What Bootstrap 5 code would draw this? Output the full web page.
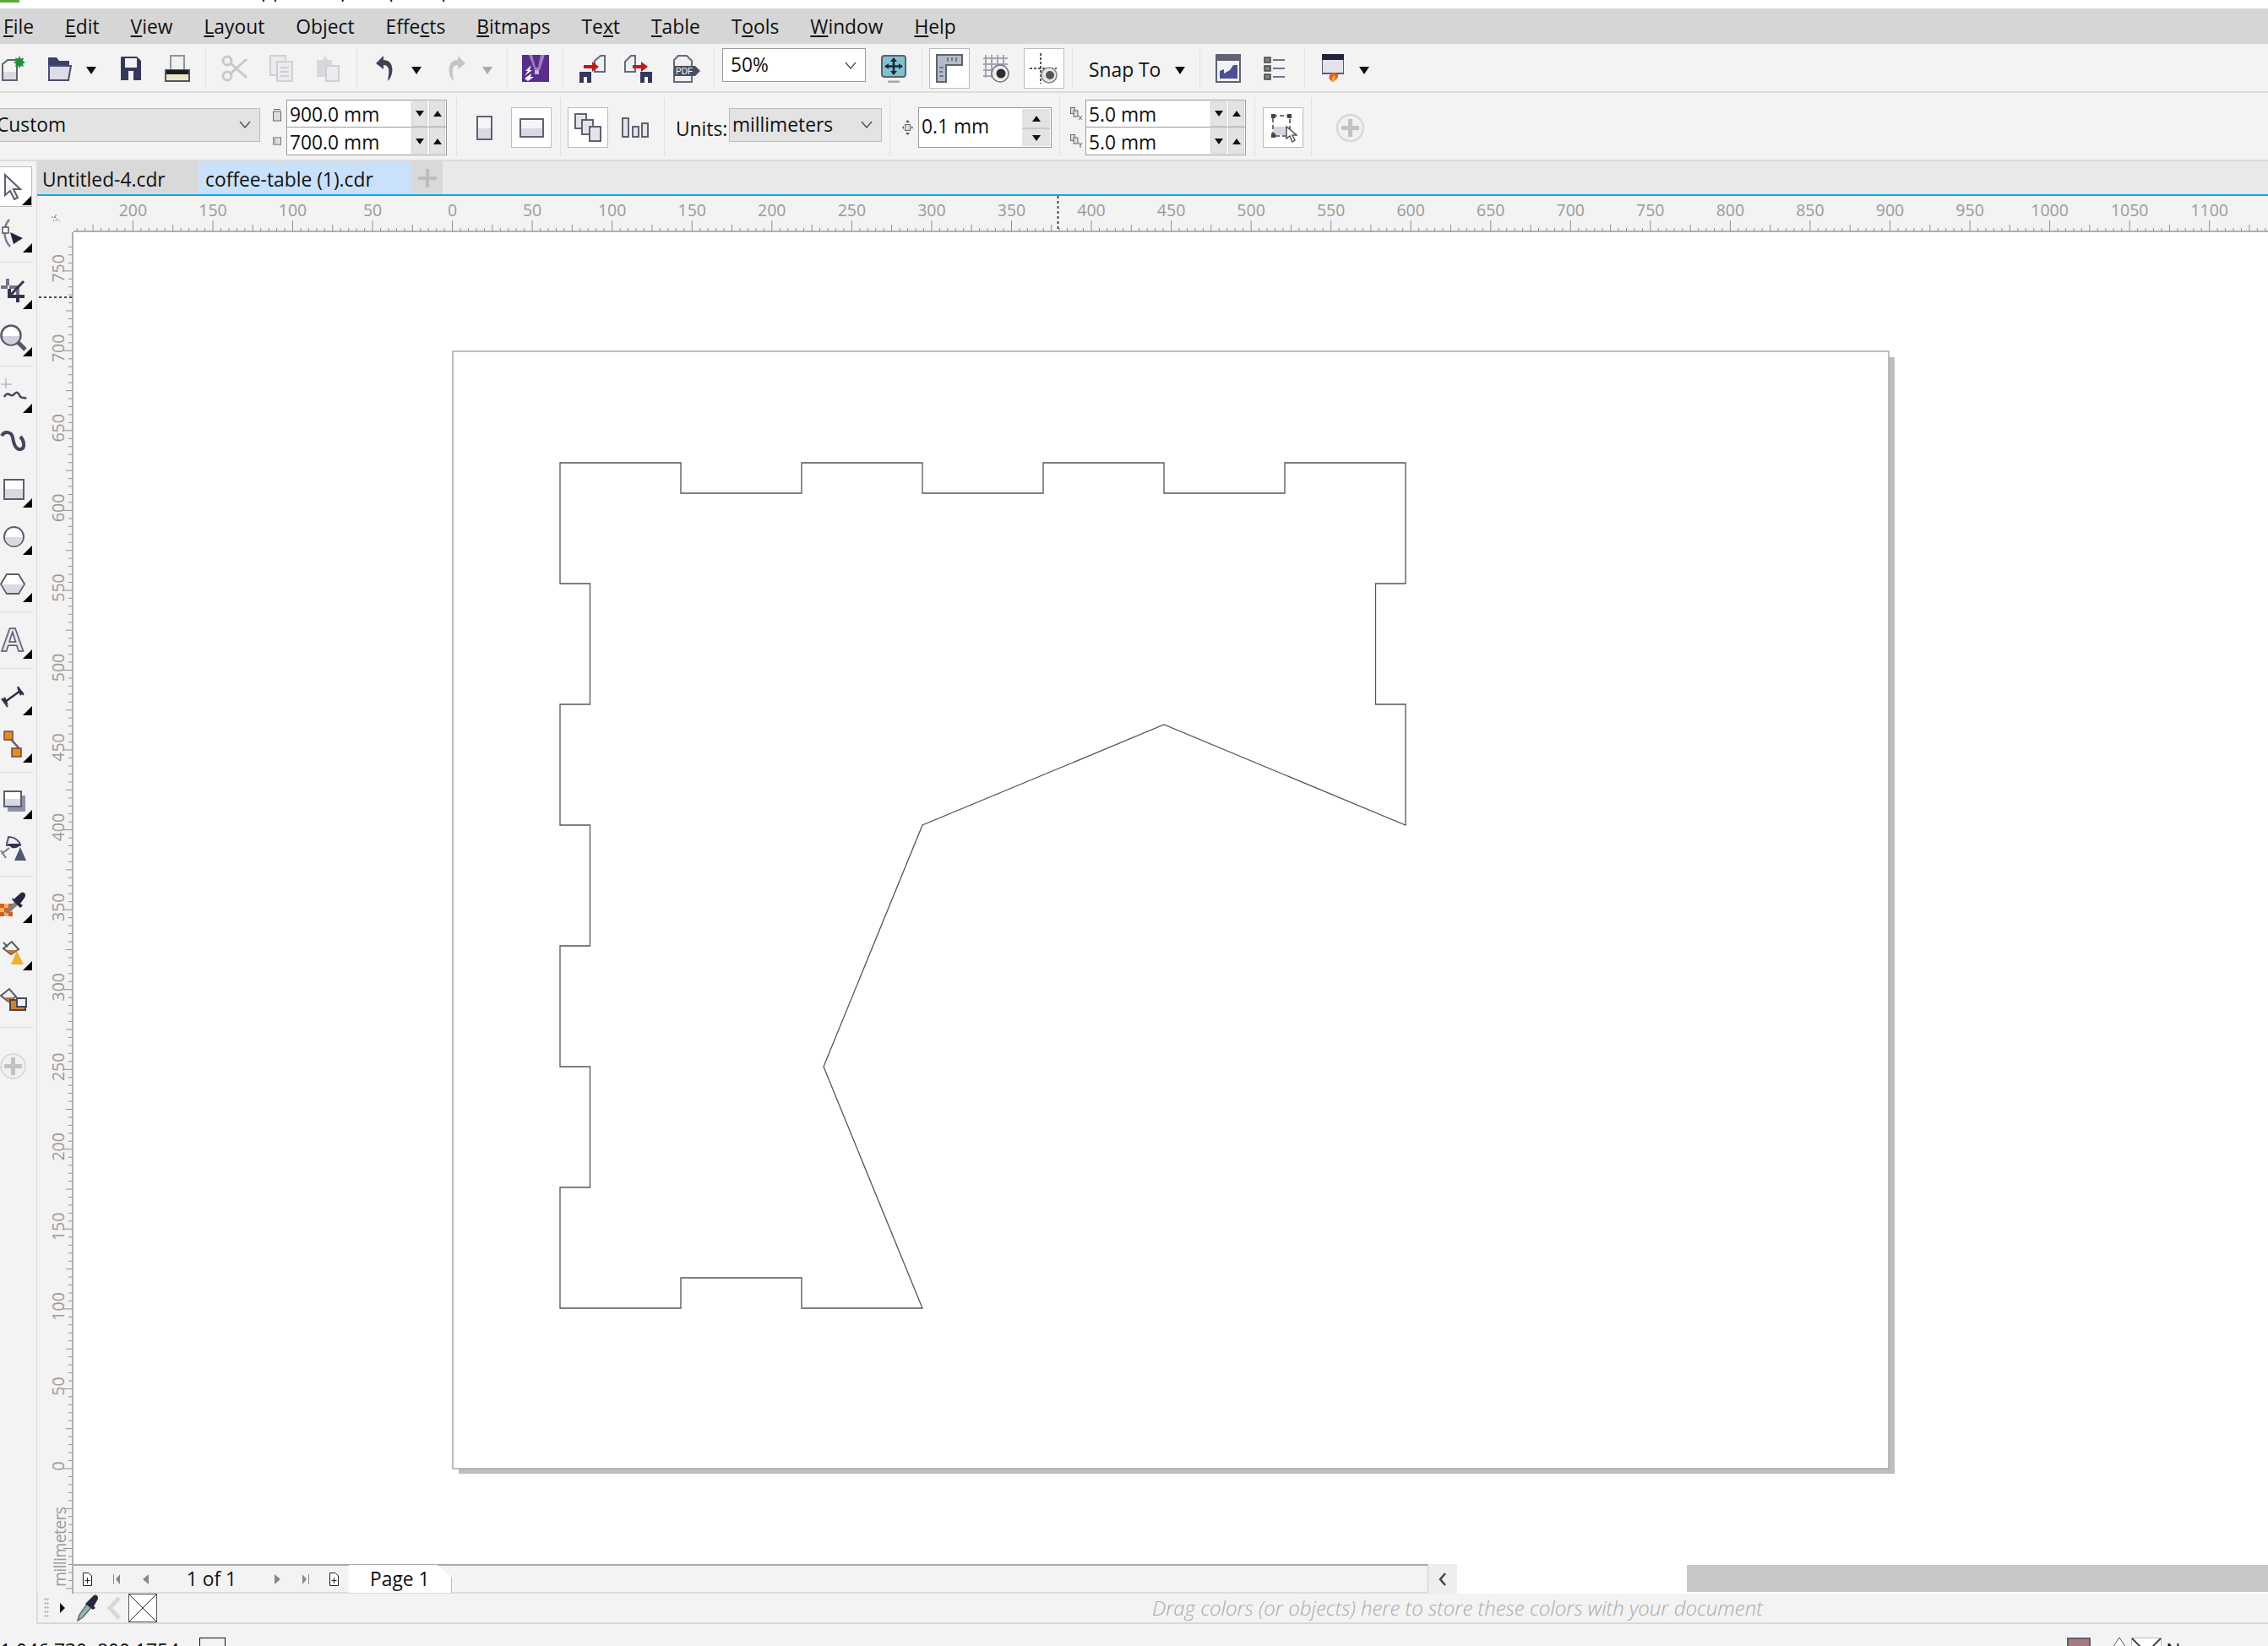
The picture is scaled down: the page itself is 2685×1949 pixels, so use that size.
<!DOCTYPE html>
<html lang="en">
<head>
<meta charset="UTF-8">
<title>CorelDRAW - coffee-table (1).cdr</title>
<link href="https://cdn.jsdelivr.net/npm/bootstrap@5.3.3/dist/css/bootstrap.min.css" rel="stylesheet">
<style>
  html, body { height: 1949px; overflow: hidden; }
  body { width: 2685px; background: #f3f3f3; color: #111; font: 22.8px/32px "Open Sans", "Liberation Sans", sans-serif; }
  svg { display: block; flex: none; }
  .flex-none { flex: none; }

  .titlebar { height: 10px; background: #fff; }
  .titlebar i { width: 23px; height: 3px; background: #5fa83f; flex: none; }
  .titlebar span { margin: -28px 0 0 -9px; white-space: nowrap; }

  .menubar { height: 42px; background: #d6d6d6; gap: 37px; padding-left: 4px; align-items: center; }
  .menubar .nav-link { padding: 2px 0 0; color: #111; }

  .toolbar { height: 58px; border-bottom: 2px solid #dcdcdc; padding-top: 5px; }
  .propbar { height: 81px; border-bottom: 2px solid #dcdcdc; padding-top: 3px; }
  .sep { width: 1px; height: 48px; background: #e2e2e2; flex: none; }
  .propbar .sep { height: 70px; }
  .tb { width: 55px; height: 48px; flex: none; }
  .tb48 { width: 48px; height: 48px; flex: none; padding: 0; border-radius: 0; }
  .tb48.on { background: #fff; border: 1px solid #bdbdbd; }
  .caret { width: 19px; height: 48px; flex: none; }
  .caret::after { content: ""; margin-top: 4px; border-top: 9px solid #111; border-left: 6.5px solid transparent; border-right: 6.5px solid transparent; }
  .caret.off::after { border-top-color: #aaa; }
  .snap { width: 86px; height: 48px; white-space: nowrap; padding-top: 4px; flex: none; }

  .combo { height: 40px; background: #e3e3e3; border: 1px solid #bdbdbd; padding: 0 10px 0 3px; margin-bottom: 7px; white-space: nowrap; flex: none; }
  .combo.white { background: #fff; border-color: #999; padding-left: 9px; margin-bottom: 8px; }
  .combo.cropped { text-indent: -6px; }
  .w170 { width: 170px; } .w181 { width: 181px; } .w310 { width: 310px; }
  .field { height: 33px; background: #fff; border: 1px solid #9a9a9a; padding-left: 3px; padding-right: 1px; }
  .field + .field { border-top: 0; }
  .field > span { padding-top: 3px; }
  .stack { width: 190px; flex: none; }
  .spin { width: 19px; height: 30px; background: #e3e3e3; border: 1px solid #d2d2d2; margin-left: 2px; flex: none; }
  .tri-d { border-top: 7px solid #111; border-left: 5px solid transparent; border-right: 5px solid transparent; }
  .tri-u { border-bottom: 7px solid #111; border-left: 5px solid transparent; border-right: 5px solid transparent; }
  .nudge { width: 158px; height: 48px; background: #fff; border: 1px solid #9a9a9a; padding-left: 3px; flex: none; }
  .nudge > span { padding-bottom: 2px; }
  .nudge .col-spin { width: 33px; height: 44px; background: #e3e3e3; margin-right: 1px; }
  .nudge .col-spin div { height: 22px; }
  .nudge .col-spin div + div { border-top: 2px solid #c9c9c9; }
  .units { width: 58px; white-space: nowrap; padding-top: 4px; flex: none; }
  .mini { width: 10px; flex: none; }

  .ml2 { margin-left: 2px; } .ml3 { margin-left: 3px; } .ml5 { margin-left: 5px; } .ml6 { margin-left: 6px; }
  .ml7 { margin-left: 7px; } .ml8 { margin-left: 8px; } .ml9 { margin-left: 9px; } .ml10 { margin-left: 10px; }
  .ml11 { margin-left: 11px; } .ml12 { margin-left: 12px; } .ml13 { margin-left: 13px; } .ml14 { margin-left: 14px; }
  .ml15 { margin-left: 15px; } .ml16 { margin-left: 16px; } .ml18 { margin-left: 18px; } .ml19 { margin-left: 19px; }
  .ml22 { margin-left: 22px; } .ml23 { margin-left: 23px; } .ml24 { margin-left: 24px; } .ml25 { margin-left: 25px; }
  .ml26 { margin-left: 26px; } .ml27 { margin-left: 27px; } .ml29 { margin-left: 29px; }
  .cut12 { margin-left: -12px; } .cut2 { margin-left: -2px; }

  .toolbox { width: 44px; border-right: 1px solid #dcdcdc; padding-top: 6px; flex: none; }
  .tool { width: 43px; height: 56px; flex: none; position: relative; }
  .tool.fly::after { content: ""; position: absolute; right: 5px; top: calc(50% + 11px); border-bottom: 11px solid #000; border-left: 11px solid transparent; }
  .tool.active { width: 38px; height: 48px; background: #fff; border: 1px solid #bbb; border-left: 0; margin-bottom: 4px; }
  .tool.active::after { right: 0; top: calc(50% + 11px); }
  .tsep { height: 1px; width: 39px; background: #dedede; margin: 5px 0; flex: none; }
  .tool-a { font: bold 38px "Liberation Sans", sans-serif; }

  .docbar { height: 41px; background: #e9e9e9; border-bottom: 2px solid #0da6e8; flex: none; }
  .docbar .nav-link { height: 39px; padding: 0 0 0 6px; color: #111; white-space: nowrap; line-height: 43px; }
  .tab-off { width: 191px; background: #d9d9d9; }
  .tab-on { width: 252px; background: #c9e1fb; padding-left: 8px !important; }
  .tab-add { width: 37px; background: #d9d9d9; }

  .ruler-row { height: 43px; flex: none; }
  .corner { width: 43px; flex: none; }
  .ruler-text { font: 400 19.5px "Open Sans", sans-serif; fill: #9a9a9a; }
  .canvas { background: #fff; position: relative; overflow: hidden; }
  .hbar { height: 35px; flex: none; background: #fff; }
  .pages { width: 1603px; background: #f3f3f3; border-top: 2px solid #aaa; border-bottom: 2px solid #dcdcdc; flex: none; }
  .pages .count { width: 149px; text-align: center; }
  .page-tab { width: 122px; height: 33px; background: #fff; border-right: 1px solid #bbb; padding-left: 25px; clip-path: polygon(0 0, 86% 0, 100% 45%, 100% 100%, 0 100%); }
  .pagebtn { width: 35px; background: #eee; border-left: 1px dotted #aaa; flex: none; }
  .gap-white { width: 272px; flex: none; }
  .thumb { height: 32px; background: #c8c8c8; margin-top: 1px; }

  .palette { height: 36px; border-bottom: 2px solid #d8d8d8; border-left: 1px solid #dcdcdc; flex: none; }
  .grip { width: 6px; height: 26px; background: radial-gradient(circle, #bbb 1.2px, transparent 1.3px) 0 0 / 3px 5px; }
  .play { border-left: 6px solid #111; border-top: 6px solid transparent; border-bottom: 6px solid transparent; }
  .swatch { width: 34px; height: 34px; border: 1px solid #555; background: #fff; }
  .hint { font-style: italic; font-weight: 300; color: #aaa; white-space: nowrap; margin-left: 1178px; font-size: 24px; }

  .status { height: 26px; overflow: hidden; padding-top: 16px; white-space: nowrap; }
  .status .box { width: 31px; height: 30px; border: 1.5px solid #111; margin-left: 24px; }
  .status .right { margin-right: 63px; }
</style>
</head>
<body class="d-flex flex-column">

  <div class="titlebar d-flex overflow-hidden flex-none">
    <i></i>
    <span>CorelDRAW 2018 (64-Bit) - Apps\Temp\Help\Drop\coffee-table (1).cdr</span>
  </div>

  <nav class="nav menubar flex-nowrap flex-none">
    <a class="nav-link"><u>F</u>ile</a>
    <a class="nav-link"><u>E</u>dit</a>
    <a class="nav-link"><u>V</u>iew</a>
    <a class="nav-link"><u>L</u>ayout</a>
    <a class="nav-link">Ob<u>j</u>ect</a>
    <a class="nav-link">Effe<u>c</u>ts</a>
    <a class="nav-link"><u>B</u>itmaps</a>
    <a class="nav-link">Te<u>x</u>t</a>
    <a class="nav-link"><u>T</u>able</a>
    <a class="nav-link">T<u>o</u>ols</a>
    <a class="nav-link"><u>W</u>indow</a>
    <a class="nav-link"><u>H</u>elp</a>
  </nav>

  <!-- standard toolbar -->
  <div class="toolbar d-flex align-items-start flex-none">
    <div class="tb cut12 d-flex align-items-center justify-content-center">
      <svg width="28" height="30" viewBox="0 0 28 30"><path d="M1 10 7 5H18V29H1Z" fill="#f4f4f4" stroke="#5e6272" stroke-width="2"/><path d="M2 19H17V28H2Z" fill="#d9dae2"/><path d="M21 0l1.500 3.500 3.500-1-1 3.500 3 2-3 1.500 1 3.500-3.500-1-1.500 3-1.500-3-3.500 1 1-3.500-3-1.500 3-2-1-3.500 3.500 1Z" fill="#1f8f3a"/></svg>
    </div>
    <div class="tb d-flex align-items-center justify-content-center">
      <svg width="28" height="30" viewBox="0 0 28 30"><path d="M0 2H10L13 6H25V13H0Z" fill="#3b3f6b"/><path d="M1 29V12H27L24 29Z" fill="#dcdde6" stroke="#4a4e72" stroke-width="2"/></svg>
    </div>
    <div class="caret d-flex align-items-center justify-content-center"></div>
    <div class="tb ml10 d-flex align-items-center justify-content-center">
      <svg width="26" height="30" viewBox="0 0 26 30"><path d="M1 2Q1 1 2 1H20L25 6V29H1Z" fill="#34385f"/><rect x="6" y="3" width="14" height="11" fill="#f2f2f5"/><rect x="10" y="18" width="6" height="11" fill="#f2f2f5"/></svg>
    </div>
    <div class="tb d-flex align-items-center justify-content-center">
      <svg width="30" height="32" viewBox="0 0 30 32"><rect x="7" y="1" width="16" height="19" fill="#eef1ef" stroke="#8a97a0" stroke-width="2"/><rect x="1" y="18" width="28" height="13" fill="#e9e6c8" stroke="#555" stroke-width="2"/><rect x="2" y="18" width="26" height="5" fill="#1d1d1d"/></svg>
    </div>
    <div class="sep ml6"></div>
    <div class="tb ml6 d-flex align-items-center justify-content-center">
      <svg width="32" height="32" viewBox="0 0 32 32" fill="none" stroke="#c8c8cc" stroke-width="3"><circle cx="7" cy="7" r="5"/><circle cx="7" cy="25" r="5"/><path d="M11 10 30 27M11 22 30 5"/></svg>
    </div>
    <div class="tb d-flex align-items-center justify-content-center">
      <svg width="28" height="32" viewBox="0 0 28 32" fill="#ececef" stroke="#d0d0d4" stroke-width="2"><rect x="1" y="1" width="18" height="23"/><rect x="9" y="8" width="18" height="23"/><path d="M13 15H23M13 20H23M13 25H23"/></svg>
    </div>
    <div class="tb d-flex align-items-center justify-content-center">
      <svg width="28" height="32" viewBox="0 0 28 32" fill="#d8d8dc"><path d="M1 6H8L11 1 14 6H19V26H1Z"/><rect x="12" y="13" width="15" height="18" fill="#ececef" stroke="#cfcfd3" stroke-width="2"/></svg>
    </div>
    <div class="sep ml7"></div>
    <div class="tb ml5 d-flex align-items-center justify-content-center">
      <svg width="22" height="32" viewBox="0 0 22 32"><path d="M9 1 0 10 9 17V12C15 12 16 17 15 24L14 31C21 25 23 6 9 6Z" fill="#3d4258"/></svg>
    </div>
    <div class="caret d-flex align-items-center justify-content-center"></div>
    <div class="tb ml10 d-flex align-items-center justify-content-center">
      <svg width="22" height="32" viewBox="0 0 22 32"><path d="M13 1 22 10 13 17V12C7 12 6 17 7 24L8 31C1 25-1 6 13 6Z" fill="#c4c4ca"/></svg>
    </div>
    <div class="caret off d-flex align-items-center justify-content-center"></div>
    <div class="sep ml14"></div>
    <div class="tb ml5 d-flex align-items-center justify-content-center">
      <svg width="32" height="32" viewBox="0 0 32 32"><rect width="32" height="32" fill="#5a2c8c"/><path d="M12 0 16 15H19L22 0H27L21 18H15L8 0Z" fill="#9d80c0"/><rect x="15" y="18" width="5" height="5" fill="#c9b6de"/><path d="M3 28 11 22 10 26H14L7 31ZM11 12 4 19 7 19 3 25 12 18 9 18Z" fill="#fff"/></svg>
    </div>
    <div class="sep ml5"></div>
    <div class="tb ml6 d-flex align-items-center justify-content-center">
      <svg width="32" height="33" viewBox="0 0 32 33"><path d="M19 7 26 1H31V20H19Z" fill="#eef0f2" stroke="#666a7a" stroke-width="2"/><rect x="1" y="20" width="14" height="13" fill="#34385f"/><rect x="6" y="26" width="4" height="7" fill="#fff"/><path d="M6 12H16V8L24 14 16 20V16H6Z" fill="#c21818"/></svg>
    </div>
    <div class="tb d-flex align-items-center justify-content-center">
      <svg width="33" height="33" viewBox="0 0 33 33"><path d="M1 8 8 1H13V20H1Z" fill="#eef0f2" stroke="#666a7a" stroke-width="2"/><rect x="19" y="20" width="14" height="13" fill="#34385f"/><rect x="24" y="26" width="4" height="7" fill="#fff"/><path d="M10 12H20V8L28 14 20 20V16H10Z" fill="#c21818"/></svg>
    </div>
    <div class="tb ml2 d-flex align-items-center justify-content-center">
      <svg width="32" height="33" viewBox="0 0 32 33"><path d="M1 6 6 1H16L22 7V32H1Z" fill="#eef0f2" stroke="#666a7a" stroke-width="2"/><path d="M1 13H26L32 19 26 25H1Z" fill="#4a4e60"/><text x="3" y="23" font-size="10" font-family="Liberation Sans" fill="#fff">PDF</text></svg>
    </div>
    <div class="sep ml5"></div>
    <div class="combo white w170 ml9 d-flex align-items-center justify-content-between">
      <span>50%</span>
      <svg width="14" height="9" viewBox="0 0 14 9" fill="none" stroke="#555" stroke-width="1.500"><path d="M1 1 7 8 13 1"/></svg>
    </div>
    <div class="tb ml5 d-flex align-items-center justify-content-center">
      <svg width="30" height="33" viewBox="0 0 30 33"><rect x="1" y="1" width="28" height="25" rx="3" fill="#7ec4cf" stroke="#5c6072" stroke-width="2"/><path d="M8 32H22" stroke="#a8a8b4" stroke-width="3"/><path d="M15 4V23M5 13.500H25" stroke="#23263c" stroke-width="2.500"/><path d="M15 3 11 8H19ZM15 24 11 19H19ZM4 13.500 9 10V17ZM26 13.500 21 10V17Z" fill="#23263c"/></svg>
    </div>
    <div class="sep ml6"></div>
    <button class="btn tb48 on ml8 d-flex align-items-center justify-content-center" type="button">
      <svg width="32" height="34" viewBox="0 0 32 34"><path d="M1 1H31V13H12V33H1Z" fill="#b5bcc9" stroke="#5e6272" stroke-width="2"/><path d="M14 4V9M19 4V8M24 4V9M4 16H9M4 21H8M4 26H9" stroke="#5e6272" stroke-width="1.500"/></svg>
    </button>
    <div class="ml8 tb48 d-flex align-items-center justify-content-center">
      <svg width="34" height="34" viewBox="0 0 34 34"><path d="M4 1V28M11 1V28M18 1V22M25 1V14M1 5H30M1 12H30M1 19H18M1 26H14" stroke="#a3a3b8" stroke-width="2"/><circle cx="21" cy="23" r="10" fill="#eee" stroke="#777" stroke-width="1.500"/><circle cx="22" cy="23" r="5.500" fill="#2c2c34"/></svg>
    </div>
    <button class="btn tb48 on ml8 d-flex align-items-center justify-content-center" type="button">
      <svg width="34" height="36" viewBox="0 0 34 36"><path d="M13 0V36M0 18H32" stroke="#222" stroke-width="1.500" stroke-dasharray="3 2"/><circle cx="23" cy="26" r="9" fill="#e8e8e8" stroke="#888" stroke-width="1.500"/><circle cx="24" cy="26" r="5" fill="#55555f"/></svg>
    </button>
    <div class="sep ml9"></div>
    <div class="snap ml19 d-flex align-items-center">Snap To</div>
    <div class="caret ml12 d-flex align-items-center justify-content-center"></div>
    <div class="sep ml14"></div>
    <div class="tb ml5 d-flex align-items-center justify-content-center">
      <svg width="30" height="34" viewBox="0 0 30 34"><rect x="1" y="1" width="28" height="32" fill="#f2f2f5" stroke="#5e6272" stroke-width="2"/><rect x="2" y="2" width="26" height="6" fill="#5e6272"/><path d="M5 29V20L10 18V23L17 19 21 13H26V29Z" fill="#4b5096"/></svg>
    </div>
    <div class="tb d-flex align-items-center justify-content-center">
      <svg width="25" height="30" viewBox="0 0 25 30"><path d="M1 2H8V8H1ZM1 12H8V18H1ZM1 22H8V28H1Z" fill="#7b8a5c" stroke="#3f4457" stroke-width="1.500"/><path d="M11 5H25M11 15H25M11 25H25" stroke="#70748a" stroke-width="2"/></svg>
    </div>
    <div class="sep ml8"></div>
    <div class="tb ml5 d-flex align-items-center justify-content-center">
      <svg width="26" height="34" viewBox="0 0 26 34"><rect width="26" height="23" fill="#e2e2ea" stroke="#5a5e70" stroke-width="2"/><rect width="26" height="7" fill="#23253c"/><path d="M13 33C8 30 7 27 10 24L13 22 19 24C20 27 18 30 13 33Z" fill="#ef5b1f"/><path d="M13 33C11 30 12 27 15 25 16 28 16 31 13 33Z" fill="#f6c23e"/></svg>
    </div>
    <div class="caret d-flex align-items-center justify-content-center"></div>
  </div>

  <!-- property bar -->
  <div class="propbar d-flex align-items-center flex-none">
    <div class="combo cropped w310 cut2 d-flex align-items-center justify-content-between">
      <span>Custom</span>
      <svg width="14" height="9" viewBox="0 0 14 9" fill="none" stroke="#555" stroke-width="1.500"><path d="M1 1 7 8 13 1"/></svg>
    </div>
    <div class="mini ml15 d-flex flex-column gap-3">
      <svg width="10" height="15" viewBox="0 0 10 15" fill="#ddd" stroke="#666"><rect x=".5" y="3" width="9" height="11"/><path d="M1 .5H9"/></svg>
      <svg width="10" height="14" viewBox="0 0 12 14" fill="#ddd" stroke="#666"><rect x="2.500" y="2" width="9" height="10"/><path d="M.5 1V13"/></svg>
    </div>
    <div class="stack ml6 d-flex flex-column">
      <div class="field d-flex align-items-center"><span class="flex-fill">900.0 mm</span><div class="spin d-flex align-items-center justify-content-center"><i class="tri-d"></i></div><div class="spin d-flex align-items-center justify-content-center"><i class="tri-u"></i></div></div>
      <div class="field d-flex align-items-center"><span class="flex-fill">700.0 mm</span><div class="spin d-flex align-items-center justify-content-center"><i class="tri-d"></i></div><div class="spin d-flex align-items-center justify-content-center"><i class="tri-u"></i></div></div>
    </div>
    <div class="sep ml11"></div>
    <svg class="ml23" width="19" height="29" viewBox="0 0 19 29"><rect x="1" y="1" width="17" height="27" fill="#f5f5f7" stroke="#5e6272" stroke-width="2"/><rect x="2" y="15" width="15" height="12" fill="#d8d9e2"/></svg>
    <button class="btn tb48 on ml22 d-flex align-items-center justify-content-center" type="button">
      <svg width="29" height="23" viewBox="0 0 29 23"><rect x="1" y="1" width="27" height="21" fill="#f5f5f7" stroke="#5e6272" stroke-width="2"/><rect x="2" y="12" width="25" height="9" fill="#d8d9e2"/></svg>
    </button>
    <div class="sep ml10"></div>
    <button class="btn tb48 on ml8 d-flex align-items-center justify-content-center" type="button">
      <svg width="32" height="34" viewBox="0 0 32 34" fill="#e4e5ec" stroke="#5e6272" stroke-width="2"><rect x="1" y="1" width="13" height="17"/><rect x="9" y="8" width="13" height="17"/><rect x="18" y="16" width="13" height="17"/></svg>
    </button>
    <svg class="ml16" width="32" height="24" viewBox="0 0 32 24" fill="#e4e5ec" stroke="#5e6272" stroke-width="2"><rect x="1" y="1" width="7" height="22"/><rect x="13" y="11" width="7" height="12"/><rect x="24" y="7" width="7" height="16"/></svg>
    <div class="sep ml18"></div>
    <div class="units ml13">Units:</div>
    <div class="combo w181 ml5 d-flex align-items-center justify-content-between">
      <span>millimeters</span>
      <svg width="14" height="9" viewBox="0 0 14 9" fill="none" stroke="#555" stroke-width="1.500"><path d="M1 1 7 8 13 1"/></svg>
    </div>
    <div class="sep ml9"></div>
    <svg class="ml14" width="13" height="18" viewBox="0 0 13 18" fill="#ddd" stroke="#666"><rect x="3.500" y="5.500" width="6" height="7"/><path d="M6.500 0 4 3H9ZM6.500 18 4 15H9ZM0 9 2 7V11ZM13 9 11 7V11Z" fill="#555" stroke="none"/></svg>
    <div class="nudge ml6 d-flex align-items-center">
      <span class="flex-fill">0.1 mm</span>
      <div class="col-spin d-flex flex-column">
        <div class="d-flex align-items-center justify-content-center"><i class="tri-u"></i></div>
        <div class="d-flex align-items-center justify-content-center"><i class="tri-d"></i></div>
      </div>
    </div>
    <div class="sep ml9"></div>
    <div class="ml12 d-flex flex-column gap-3">
      <svg width="15" height="16" viewBox="0 0 15 16" fill="#ddd" stroke="#666"><rect x=".5" y=".5" width="5" height="7"/><rect x="4" y="4" width="5" height="7"/><path d="M10 10 14 15M14 10 10 15"/></svg>
      <svg width="15" height="16" viewBox="0 0 15 16" fill="#ddd" stroke="#666"><rect x=".5" y=".5" width="5" height="7"/><rect x="4" y="4" width="5" height="7"/><path d="M10 10 12 13 14 10M12 13V16"/></svg>
    </div>
    <div class="stack ml3 d-flex flex-column">
      <div class="field d-flex align-items-center"><span class="flex-fill">5.0 mm</span><div class="spin d-flex align-items-center justify-content-center"><i class="tri-d"></i></div><div class="spin d-flex align-items-center justify-content-center"><i class="tri-u"></i></div></div>
      <div class="field d-flex align-items-center"><span class="flex-fill">5.0 mm</span><div class="spin d-flex align-items-center justify-content-center"><i class="tri-d"></i></div><div class="spin d-flex align-items-center justify-content-center"><i class="tri-u"></i></div></div>
    </div>
    <div class="sep ml10"></div>
    <button class="btn tb48 on ml9 d-flex align-items-center justify-content-center" type="button">
      <svg width="34" height="36" viewBox="0 0 34 36"><rect x="5" y="4" width="20" height="24" fill="#fff" stroke="#444" stroke-width="1.500" stroke-dasharray="5 3"/><rect x="6" y="17" width="18" height="10" fill="#d3d5e0"/><path d="M3 2H8V7H3ZM22 2H27V7H22ZM3 25H8V30H3Z" fill="#444"/><path d="M21 17V31L25 28 28 35 31 33 28 27H33Z" fill="#fff" stroke="#555" stroke-width="1.500"/></svg>
    </button>
    <div class="sep ml9"></div>
    <svg class="ml29" width="33" height="33" viewBox="0 0 33 33"><circle cx="16.500" cy="16.500" r="15.500" fill="#f0f0f0" stroke="#d4d4d4" stroke-width="2"/><path d="M16.500 6V27M6 16.500H27" stroke="#c2c2c2" stroke-width="5"/></svg>
  </div>

  <div class="d-flex flex-fill overflow-hidden">
    <!-- toolbox -->
    <div class="toolbox d-flex flex-column">
      <div class="tool fly active d-flex align-items-center">
        <svg width="26" height="32" viewBox="0 0 26 32"><path d="M6 2V26L12 21 17 31 21 29 16 19H24Z" fill="#f4f4f6" stroke="#5a5e70" stroke-width="2"/></svg>
      </div>
      <div class="tool fly d-flex align-items-center">
        <svg width="32" height="36" viewBox="0 0 32 36"><path d="M11 1C4 8 3 24 12 33" fill="none" stroke="#7c8094" stroke-width="2.500"/><rect x="3" y="10" width="7" height="7" fill="#fff" stroke="#555" stroke-width="1.500"/><path d="M12 16 27 23 16 30Z" fill="#22243c"/></svg>
      </div>
      <div class="tsep"></div>
      <div class="tool fly d-flex align-items-center">
        <svg width="30" height="30" viewBox="0 0 30 30"><path d="M7 1H11V9H23V20H19V13H11V9H7ZM1 9H9V13H1Z" fill="#6f7488"/><path d="M9 13H13V20H29V24H23V29H19V24H9Z" fill="#33364a"/><path d="M10 23 28 4" stroke="#33364a" stroke-width="3"/></svg>
      </div>
      <div class="tool fly d-flex align-items-center">
        <svg width="32" height="32" viewBox="0 0 32 32"><circle cx="13" cy="13" r="11.500" fill="#fff" stroke="#55586a" stroke-width="2.500"/><path d="M3 14H23A10 10 0 0 1 3 14Z" fill="#cfd0da"/><path d="M21 21 30 30" stroke="#55586a" stroke-width="5"/></svg>
      </div>
      <div class="tsep"></div>
      <div class="tool fly d-flex align-items-center">
        <svg class="mb-2" width="32" height="30" viewBox="0 0 32 30" fill="none"><path d="M7 0V12M1 7H14" stroke="#9ca0ad" stroke-width="1"/><path d="M5 22C9 14 12 22 15 20S20 14 23 20 28 21 31 24" stroke="#44475c" stroke-width="2.500"/></svg>
      </div>
      <div class="tool d-flex align-items-center">
        <svg width="30" height="26" viewBox="0 0 30 26" fill="none"><path d="M2 6C6-1 14 2 15 8S18 23 24 22 29 12 24 7" stroke="#44475c" stroke-width="4"/></svg>
      </div>
      <div class="tool fly d-flex align-items-center">
        <svg class="ms-1" width="25" height="25" viewBox="0 0 25 25"><rect x="1" y="1" width="23" height="23" fill="#fff" stroke="#5a5e70" stroke-width="2"/><rect x="2" y="12" width="21" height="11" fill="#d8d9e2"/></svg>
      </div>
      <div class="tool fly d-flex align-items-center">
        <svg class="ms-1" width="25" height="25" viewBox="0 0 25 25"><circle cx="12.500" cy="12.500" r="11.500" fill="#fff" stroke="#5a5e70" stroke-width="2"/><path d="M2 13H23A10.500 10.500 0 0 1 2 13Z" fill="#d8d9e2"/></svg>
      </div>
      <div class="tool fly d-flex align-items-center">
        <svg width="30" height="25" viewBox="0 0 30 25"><path d="M8 1H22L29 12.500 22 24H8L1 12.500Z" fill="#fff" stroke="#5a5e70" stroke-width="2"/><path d="M2 13H28L21.500 23H8.500Z" fill="#d8d9e2"/></svg>
      </div>
      <div class="tsep"></div>
      <div class="tool fly d-flex align-items-center">
        <svg width="30" height="34" viewBox="0 0 30 34"><text class="tool-a" x="1" y="30" fill="#e8e8f0" stroke="#55586a" stroke-width="1.500">A</text></svg>
      </div>
      <div class="tsep"></div>
      <div class="tool fly d-flex align-items-center">
        <svg width="30" height="26" viewBox="0 0 30 26"><path d="M6 19 24 6" stroke="#2c2e42" stroke-width="2.500"/><path d="M2 17 10 23 6 13ZM28 8 20 2 24 12Z" fill="#2c2e42"/><path d="M2 15 9 25M21 1 28 11" stroke="#2c2e42" stroke-width="2"/></svg>
      </div>
      <div class="tool fly d-flex align-items-center">
        <svg class="ms-1" width="26" height="32" viewBox="0 0 26 32"><path d="M7 8 21 24" stroke="#5a5e70" stroke-width="2.500"/><rect x="1" y="1" width="10" height="10" fill="#f08a12" stroke="#6a4a50" stroke-width="1.500"/><rect x="10" y="21" width="11" height="10" fill="#f08a12" stroke="#6a4a50" stroke-width="1.500"/></svg>
      </div>
      <div class="tsep"></div>
      <div class="tool fly d-flex align-items-center">
        <svg class="ms-1" width="26" height="25" viewBox="0 0 26 25"><rect x="5" y="6" width="21" height="19" fill="#8f90a8"/><rect x="1" y="1" width="20" height="18" fill="#fff" stroke="#5a5e70" stroke-width="2"/><rect x="2" y="10" width="18" height="8" fill="#d8d9e2"/></svg>
      </div>
      <div class="tool d-flex align-items-center">
        <svg width="32" height="30" viewBox="0 0 32 30"><path d="M10 2C18 2 24 8 24 12L8 12C8 8 10 4 10 2Z" fill="#f0f0f4" stroke="#55586a" stroke-width="2"/><path d="M9 10H24C24 14 18 16 14 15Z" fill="#2f3358"/><path d="M11 15 2 22M1 18 7 27" stroke="#777b8a" stroke-width="2"/><path d="M24 14 31 30H17Z" fill="#50566f"/></svg>
      </div>
      <div class="tsep"></div>
      <div class="tool fly d-flex align-items-center">
        <svg width="30" height="30" viewBox="0 0 30 30"><path d="M0 14H5V19H0ZM5 19H10V24H5ZM10 14H15V19H10ZM0 24H5V29H0ZM10 24H15V29H10Z" fill="#d85f10"/><path d="M0 19H5V24H0ZM5 14H10V19H5ZM5 24H10V29H5ZM10 19H15V24H10Z" fill="#f3b16c"/><path d="M6 24 18 11 22 15 9 26Z" fill="#7c8094"/><path d="M16 9 25 1C28-1 32 3 29 7L24 14 27 16 24 19 14 9 16 7Z" fill="#26283e"/></svg>
      </div>
      <div class="tool fly d-flex align-items-center">
        <svg width="30" height="30" viewBox="0 0 30 30"><path d="M4 11 14 3 22 12 13 18Z" fill="#f0f0f0" stroke="#55586a" stroke-width="2"/><path d="M8 13H21L13 18Z" fill="#c87820"/><path d="M4 4 9 9" stroke="#55586a" stroke-width="2"/><path d="M20 14 28 30H13Z" fill="#efb12d"/></svg>
      </div>
      <div class="tool d-flex align-items-center">
        <svg width="32" height="30" viewBox="0 0 32 30"><path d="M1 11 11 3 19 12 10 18Z" fill="#f0f0f0" stroke="#55586a" stroke-width="2"/><path d="M5 13H18L10 18Z" fill="#c87820"/><rect x="12" y="16" width="18" height="12" fill="#d58226" stroke="#44475c" stroke-width="2"/><rect x="20" y="14" width="11" height="10" fill="#f3f3f3" stroke="#44475c" stroke-width="2"/></svg>
      </div>
      <div class="tsep"></div>
      <div class="tool d-flex align-items-center pt-4">
        <svg width="31" height="31" viewBox="0 0 31 31"><circle cx="15.500" cy="15.500" r="14.500" fill="#f0f0f0" stroke="#d4d4d4" stroke-width="1.500"/><path d="M15.500 5V26M5 15.500H26" stroke="#c2c2c2" stroke-width="5"/></svg>
      </div>
    </div>

    <div class="d-flex flex-column flex-fill overflow-hidden">
      <!-- document tabs -->
      <div class="docbar nav flex-nowrap">
        <a class="nav-link tab-off">Untitled-4.cdr</a>
        <a class="nav-link tab-on">coffee-table (1).cdr</a>
        <div class="tab-add d-flex align-items-center justify-content-center">
          <svg width="22" height="22" viewBox="0 0 22 22"><path d="M11 0V22M0 11H22" stroke="#bcbcbc" stroke-width="4"/></svg>
        </div>
      </div>

      <div class="ruler-row d-flex">
        <div class="corner d-flex align-items-center justify-content-center pt-2">
          <svg width="12" height="11" viewBox="0 0 12 11" fill="none" stroke="#555" stroke-width="1" stroke-dasharray="1.500 1.500"><path d="M1 5H6V1M5 5 11 10M3 9H7"/></svg>
        </div>
        <svg id="rulerTop" width="2598" height="43" viewBox="87 232 2598 43"></svg>
      </div>

      <div class="d-flex flex-fill overflow-hidden">
        <svg id="rulerLeft" width="43" height="1612" viewBox="44 275 43 1612"></svg>
        <div class="d-flex flex-column flex-fill overflow-hidden">
          <div class="canvas flex-fill">
            <svg width="2598" height="1577" viewBox="87 275 2598 1577">
              <rect x="543" y="423" width="1700" height="1322" fill="#bdbdbd"/>
              <rect x="536" y="416" width="1700" height="1323" fill="#fff" stroke="#a8a8a8" stroke-width="1.500"/>
              <path fill="none" stroke="#555" stroke-width="1.300" d="M663 548H806V584H949V548H1092V584H1235V548H1378V584H1521V548H1664V691H1628.500V834H1664V977L1378 858 1092 977 975 1263 1092 1549H949V1513H806V1549H663V1406H698.500V1263H663V1120H698.500V977H663V834H698.500V691H663Z"/>
            </svg>
          </div>
          <div class="hbar d-flex">
            <div class="pages d-flex align-items-center">
              <svg class="ml11" width="11" height="16" viewBox="0 0 11 16" fill="#fff" stroke="#222"><path d="M.5.5H7L10.500 4V15.500H.5ZM5.500 6V13M2.500 9.500H8.500"/></svg>
              <svg class="ml25" width="8" height="14" viewBox="0 0 8 14" fill="#888"><path d="M0 1H1V13H0ZM8 1V13L3 7Z"/></svg>
              <svg class="ml27" width="7" height="14" viewBox="0 0 7 14" fill="#888"><path d="M7 1V13L0 7Z"/></svg>
              <div class="count">1 of 1</div>
              <svg width="7" height="14" viewBox="0 0 7 14" fill="#888"><path d="M0 1V13L7 7Z"/></svg>
              <svg class="ml26" width="8" height="14" viewBox="0 0 8 14" fill="#888"><path d="M7 1H8V13H7ZM0 1V13L5 7Z"/></svg>
              <svg class="ml24" width="11" height="16" viewBox="0 0 11 16" fill="#fff" stroke="#222"><path d="M.5.5H7L10.500 4V15.500H.5ZM5.500 6V13M2.500 9.500H8.500"/></svg>
              <div class="page-tab ml12 d-flex align-items-center">Page 1</div>
            </div>
            <div class="pagebtn d-flex align-items-center justify-content-center">
              <svg width="10" height="16" viewBox="0 0 10 16" fill="none" stroke="#444" stroke-width="2.500"><path d="M8 1 2 8 8 15"/></svg>
            </div>
            <div class="gap-white"></div>
            <div class="thumb flex-fill"></div>
          </div>
        </div>
      </div>

      <!-- document palette -->
      <div class="palette d-flex align-items-center">
        <div class="grip ml7"></div>
        <i class="play ml13"></i>
        <svg class="ml13" width="27" height="32" viewBox="0 0 27 32"><path d="M2 31 4 24 14 10 19 14 8 27Z" fill="#9ab7a8" stroke="#50707a" stroke-width="1.500"/><path d="M13 9 21 1C24-1 28 3 25 7L21 14 23 16 20 18 11 11Z" fill="#26283e"/></svg>
        <svg class="ml9" width="18" height="28" viewBox="0 0 18 28" fill="none" stroke="#d8d8d8" stroke-width="5"><path d="M15 2 4 14 15 26"/></svg>
        <div class="swatch ml8"><svg width="32" height="32" viewBox="0 0 32 32" fill="none" stroke="#333" stroke-width="1"><path d="M0 0 32 32M32 0 0 32"/></svg></div>
        <div class="hint">Drag colors (or objects) here to store these colors with your document</div>
      </div>
    </div>
  </div>

  <!-- status bar, cut off by the edge of the picture -->
  <div class="status d-flex flex-none">
    <span>1,046.730, 800.1754</span>
    <div class="box"></div>
    <div class="right d-flex ms-auto">
      <svg width="28" height="20" viewBox="0 0 28 20"><rect x="1" y="1" width="26" height="18" fill="#a87a80" stroke="#5a5e70" stroke-width="2"/></svg>
      <svg class="ml25" width="18" height="20" viewBox="0 0 18 20"><path d="M9 0 17 12H1Z" fill="#fff" stroke="#555"/><path d="M1 11H17V20H1Z" fill="#e89a3a"/></svg>
      <svg class="ml5" width="36" height="22" viewBox="0 0 36 22" fill="#fff"><rect x=".5" y=".5" width="35" height="35" stroke="#bbb"/><path d="M1 1 35 35M35 1 1 35" stroke="#444" stroke-width="2"/></svg>
      <span class="ml5">None</span>
    </div>
  </div>

  <script src="https://cdn.jsdelivr.net/npm/bootstrap@5.3.3/dist/js/bootstrap.bundle.min.js"></script>
  <script>
    // rulers: the page origin sits at x 535.6 / y 1739, 1.891 px per mm
    const pxPerMm = 1.891;
    let topTicks = '', topLabels = '';
    for (let mm = -235; mm <= 1140; mm += 5) {
      const x = (535.6 + mm * pxPerMm).toFixed(1);
      const len = mm % 50 === 0 ? 13 : mm % 25 === 0 ? 8 : 4;
      topTicks += `M${x} 274V${274 - len}`;
      if (mm % 50 === 0 && mm >= -200) {
        topLabels += `<text class="ruler-text" x="${x}" y="256" text-anchor="middle">${Math.abs(mm)}</text>`;
      }
    }
    document.getElementById('rulerTop').innerHTML =
      `<path d="${topTicks}" stroke="#8f8f8f" fill="none"/><path d="M87 274H2685" stroke="#999" stroke-width="1.500"/>${topLabels}` +
      `<path d="M1252.500 232V274" stroke="#111" stroke-width="1.500" stroke-dasharray="3 3"/>`;

    let leftTicks = '', leftLabels = '';
    for (let mm = -75; mm <= 765; mm += 5) {
      const y = (1739 - mm * pxPerMm).toFixed(1);
      const len = mm % 50 === 0 ? 10 : mm % 25 === 0 ? 7 : 4;
      leftTicks += `M85 ${y}H${85 - len}`;
      if (mm % 50 === 0 && mm >= 0) {
        leftLabels += `<text class="ruler-text" transform="rotate(-90 76 ${y - 3})" x="76" y="${y - 3}" text-anchor="middle">${mm}</text>`;
      }
    }
    document.getElementById('rulerLeft').innerHTML =
      `<path d="${leftTicks}" stroke="#8f8f8f" fill="none"/><path d="M86 275V1887" stroke="#999" stroke-width="1.500"/>${leftLabels}` +
      `<text class="ruler-text" transform="rotate(-90 78 1879)" x="78" y="1879" textLength="95">millimeters</text>` +
      `<path d="M46 352H85" stroke="#111" stroke-width="1.500" stroke-dasharray="3 3"/>`;
  </script>
</body>
</html>
